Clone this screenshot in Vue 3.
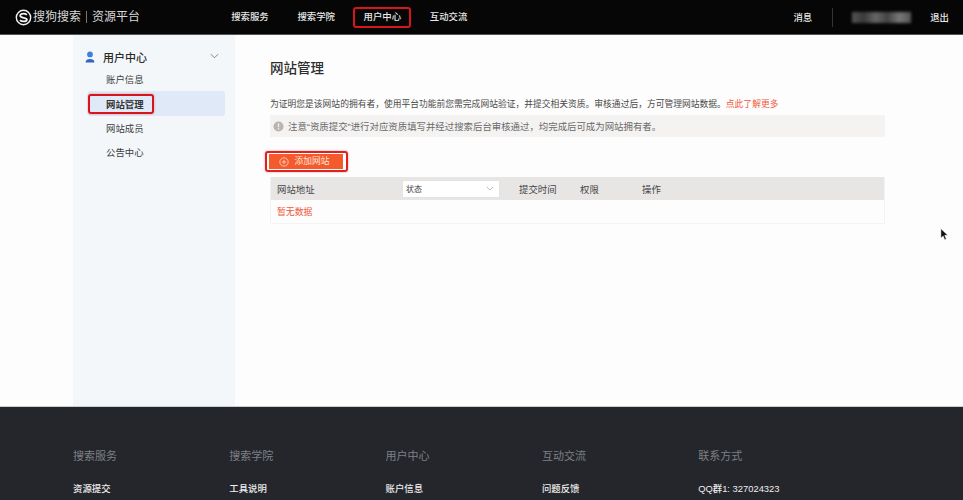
<template>
  <div class="page">
    <header class="topbar">
      <div class="brand">
        <svg class="logo" viewBox="0 0 18 18" width="17" height="17">
          <circle cx="9" cy="9" r="7.6" fill="none" stroke="#f2f2f2" stroke-width="1.5" />
          <path d="M12.6 6.3C11.6 5.3 10.2 5 8.8 5 6.9 5 5.5 5.9 5.5 7.2c0 2.9 7.1 1.3 7.1 3.9 0 1.3-1.5 2.1-3.5 2.1-1.5 0-3-.5-3.9-1.5" fill="none" stroke="#f2f2f2" stroke-width="1.9" />
        </svg>
        <span class="brand-name">搜狗搜索</span>
        <i class="brand-sep"></i>
        <span class="brand-name">资源平台</span>
      </div>
      <nav class="nav">
        <a v-for="n in navItems" :key="n" class="nav-item" :class="{ marked: n === '用户中心' }">{{ n }}</a>
      </nav>
      <div class="top-right">
        <span>消息</span>
        <i class="top-sep"></i>
        <span class="blurred"></span>
        <span>退出</span>
      </div>
    </header>

    <main class="main">
      <aside class="sidebar">
        <div class="side-head">
          <svg class="user-icon" viewBox="0 0 10 12" width="10" height="12">
            <circle cx="5" cy="3.4" r="2.9" fill="#3f7fe0" />
            <path d="M.6 11.4c0-2.4 1.9-3.4 4.4-3.4s4.4 1 4.4 3.4z" fill="#2f66c8" />
          </svg>
          <span class="side-title">用户中心</span>
          <svg class="chev" viewBox="0 0 10 6" width="9" height="6">
            <path d="M1 1l4 4 4-4" fill="none" stroke="#777" stroke-width="1" />
          </svg>
        </div>
        <ul class="side-list">
          <li v-for="m in menu" :key="m" class="side-item" :class="{ active: m === '网站管理' }">
            <span class="side-label">{{ m }}</span>
          </li>
        </ul>
      </aside>

      <section class="content">
        <h1 class="title">网站管理</h1>
        <p class="desc">为证明您是该网站的拥有者，使用平台功能前您需完成网站验证，并提交相关资质。审核通过后，方可管理网站数据。<a class="more">点此了解更多</a></p>
        <div class="notice">
          <svg viewBox="0 0 12 12" width="11" height="11">
            <circle cx="6" cy="6" r="5.5" fill="#b9b5b2" />
            <rect x="5.3" y="2.6" width="1.4" height="4.2" fill="#f3f2f1" />
            <rect x="5.3" y="7.8" width="1.4" height="1.5" fill="#f3f2f1" />
          </svg>
          <span>注意“资质提交”进行对应资质填写并经过搜索后台审核通过，均完成后可成为网站拥有者。</span>
        </div>
        <div class="add-mark">
          <button class="add-btn">
            <svg viewBox="0 0 12 12" width="10" height="10">
              <circle cx="6" cy="6" r="5" fill="none" stroke="#ffd9cc" stroke-width="1" />
              <path d="M3.4 6h5.2M6 3.4v5.2" stroke="#ffd9cc" stroke-width="1" />
            </svg>
            <span>添加网站</span>
          </button>
        </div>
        <div class="table">
          <div class="thead">
            <span class="col-url">网站地址</span>
            <div class="select">
              <span>状态</span>
              <svg viewBox="0 0 10 6" width="8" height="5">
                <path d="M1 1l4 4 4-4" fill="none" stroke="#aaa" stroke-width="1" />
              </svg>
            </div>
            <span class="col-time">提交时间</span>
            <span class="col-auth">权限</span>
            <span>操作</span>
          </div>
          <div class="empty">暂无数据</div>
        </div>
      </section>
    </main>

    <footer class="footer">
      <div v-for="c in footerCols" :key="c.head" class="foot-col">
        <div class="foot-head">{{ c.head }}</div>
        <div class="foot-link">{{ c.link }}</div>
      </div>
    </footer>

    <svg class="cursor" viewBox="0 0 10 14" width="9" height="13">
      <path d="M1 .5v10.4l2.5-2.3 1.8 4.2 1.7-.8-1.8-4.1h3.4z" fill="#111" stroke="#fff" stroke-width=".5" />
    </svg>
  </div>
</template>

<script setup>
const navItems = ['搜索服务', '搜索学院', '用户中心', '互动交流']
const menu = ['账户信息', '网站管理', '网站成员', '公告中心']
const footerCols = [
  { head: '搜索服务', link: '资源提交' },
  { head: '搜索学院', link: '工具说明' },
  { head: '用户中心', link: '账户信息' },
  { head: '互动交流', link: '问题反馈' },
  { head: '联系方式', link: 'QQ群1: 327024323' },
]
</script>

<style>
html, body { margin: 0; background: #fff; overflow: hidden; }
</style>

<style scoped>
.page {
  position: relative;
  width: 963px;
  height: 500px;
  overflow: hidden;
  display: flex;
  flex-direction: column;
  background: #fdfdfd;
  font-family: "Liberation Sans", "Noto Sans CJK SC", sans-serif;
  color: #333;
}
.topbar {
  flex: 0 0 34px;
  display: flex;
  align-items: center;
  background: #060606;
  color: #e8e8e8;
  font-size: 9.4px;
  font-weight: 500;
  border-bottom: 1px solid #555;
}
.brand {
  display: flex;
  align-items: center;
  margin-left: 15px;
  width: 216px;
  color: #d8d8d8;
  font-weight: 400;
}
.logo { margin-right: 1px; }
.brand-name { font-size: 12px; letter-spacing: 0; line-height: 16px; }
.brand-sep { width: 1px; height: 12px; background: #777; margin: 0 5px 0 5px; }
.nav { display: flex; gap: 28.2px; }
.nav-item { position: relative; width: 38px; text-align: center; line-height: 14px; white-space: nowrap; }
.nav-item.marked::after {
  content: "";
  position: absolute;
  left: -10px; right: -10px; top: -3px; bottom: -4px;
  border: 2px solid #d8141c;
  border-radius: 3px;
}
.top-right {
  margin-left: auto;
  margin-right: 14px;
  display: flex;
  align-items: center;
}
.top-sep { width: 1px; height: 19px; background: #333; margin: 0 19px 0 20px; }
.blurred {
  width: 59px;
  height: 11px;
  margin-right: 19px;
  background: linear-gradient(90deg, #555 0, #3a3a3a 20%, #666 40%, #444 60%, #777 80%, #555 100%);
  filter: blur(1.5px);
}
.main { flex: 0 0 372px; display: flex; padding-left: 73px; }
.sidebar { width: 162px; background: #f4f7fa; padding: 13px 10px 0 15px; box-sizing: border-box; }
.side-head { display: flex; align-items: center; height: 18px; }
.side-title { margin-left: 6px; font-size: 11px; font-weight: 500; color: #2a2a2a; }
.user-icon { margin-left: -3px; margin-right: 2px; }
.chev { margin-left: auto; margin-right: 6px; margin-top: -2px; }
.side-list { list-style: none; margin: 1px 0 0; padding: 0; }
.side-item { height: 24.4px; display: flex; align-items: center; padding-left: 18px; font-size: 9.4px; color: #3c3c3c; border-radius: 3px; }
.side-item.active { background: #dfe9f8; }
.side-label { position: relative; white-space: nowrap; }
.side-item.active .side-label { font-weight: 700; color: #333; }
.side-item.active .side-label::after {
  content: "";
  position: absolute;
  left: -18px; right: -10px; top: -3px; bottom: -3px;
  border: 2px solid #d8141c;
  border-radius: 3px;
  box-shadow: 0 0 2px rgba(216, 20, 28, .5);
}
.content { width: 615px; margin-left: 35px; }
.title { margin: 24px 0 0; font-size: 13.5px; font-weight: 500; line-height: 20px; color: #2e2e2e; }
.desc { margin: 18px 0 0; font-size: 8.78px; line-height: 14px; white-space: nowrap; color: #4a4a4a; }
.more { color: #f0583a; }
.notice {
  margin-top: 4px;
  height: 22px;
  display: flex;
  align-items: center;
  gap: 4px;
  padding-left: 3px;
  background: #f4f3f2;
  font-size: 9.42px;
  color: #6a6a6a;
  white-space: nowrap;
}
.add-mark {
  display: inline-block;
  margin: 14px 0 0 -5px;
  padding: 1px 3px 1px 2px;
  border: 2px solid #e0201f;
  border-radius: 3px;
  line-height: 0;
  box-shadow: 0 0 2px rgba(216, 20, 28, .5);
}
.add-btn {
  width: 74px;
  height: 15px;
  border: 0;
  padding: 0 4px 0 0;
  box-sizing: border-box;
  background: #f45a2c;
  color: #ffe3d8;
  font: inherit;
  font-size: 8.75px;
  line-height: 15px;
  display: inline-flex;
  align-items: center;
  justify-content: center;
  gap: 6px;
}
.table { margin-top: 5px; border: 1px solid #f3f3f3; border-top: 0; height: 46px; }
.thead {
  height: 23px;
  display: flex;
  align-items: center;
  background: #e8e6e5;
  font-size: 9.4px;
  color: #444;
  white-space: nowrap;
}
.col-url { width: 125px; margin-left: 6px; }
.select {
  width: 98px;
  height: 18px;
  box-sizing: border-box;
  background: #fff;
  border: 1px solid #e3e3e3;
  display: flex;
  align-items: center;
  justify-content: space-between;
  padding: 0 5px 0 3px;
  font-size: 8px;
  margin-right: 19px;
}
.col-time { width: 61px; }
.col-auth { width: 62px; }
.empty { height: 23px; line-height: 24px; padding-left: 6px; font-size: 8.9px; color: #f0583a; }
.footer {
  flex: 1;
  display: flex;
  padding-left: 73px;
  background: #24262c;
  border-top: 1px solid #ccc;
  margin-top: -1px;
}
.foot-col { width: 156.3px; }
.foot-head { margin-top: 40px; font-size: 11px; line-height: 18px; color: #7e8085; }
.foot-link { margin-top: 17px; font-size: 9.4px; font-weight: 500; line-height: 14px; color: #eee; white-space: nowrap; }
.cursor { position: absolute; left: 940px; top: 228px; }
</style>
